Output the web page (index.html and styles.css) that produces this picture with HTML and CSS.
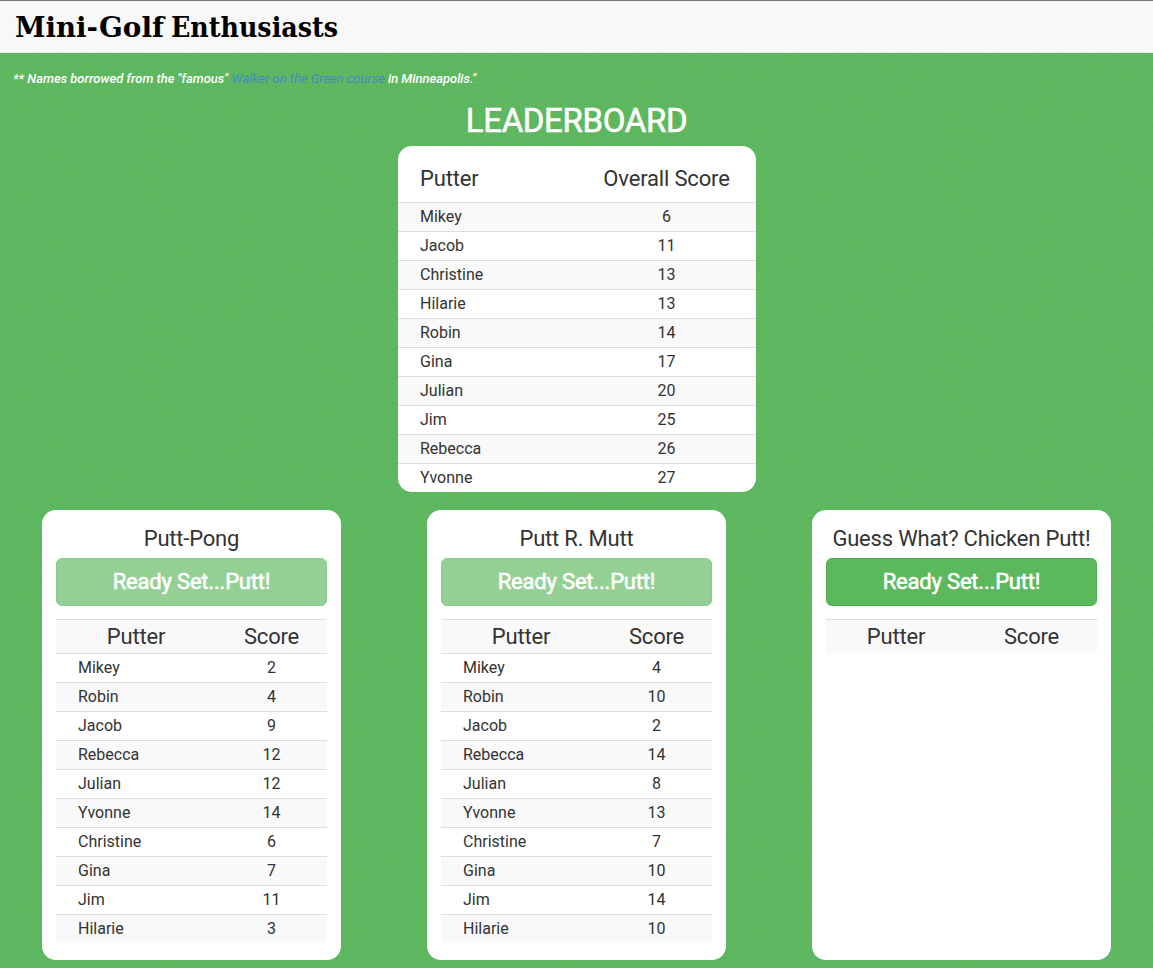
FILE: index.html
```html
<!DOCTYPE html>
<html lang="en">
<head>
<meta charset="utf-8">
<title>Mini-Golf Enthusiasts</title>
<link rel="stylesheet" href="styles.css">
</head>
<body>
<header class="navbar"><svg class="brand" width="400" height="51" role="img"><text x="15" y="37" textLength="83" lengthAdjust="spacingAndGlyphs">Mini-</text><text x="99" y="37" textLength="65" lengthAdjust="spacingAndGlyphs">Golf</text><text x="171" y="37" textLength="167" lengthAdjust="spacingAndGlyphs">Enthusiasts</text></svg></header>
<main>
<p class="note">** Names borrowed from the "famous" <a href="#">Walker on the Green course</a> in Minneapolis."</p>
<h1 class="title">LEADERBOARD</h1>
<table class="scores overall">
<thead><tr><th>Putter</th><th>Overall Score</th></tr></thead>
<tbody>
<tr><td>Mikey</td><td>6</td></tr>
<tr><td>Jacob</td><td>11</td></tr>
<tr><td>Christine</td><td>13</td></tr>
<tr><td>Hilarie</td><td>13</td></tr>
<tr><td>Robin</td><td>14</td></tr>
<tr><td>Gina</td><td>17</td></tr>
<tr><td>Julian</td><td>20</td></tr>
<tr><td>Jim</td><td>25</td></tr>
<tr><td>Rebecca</td><td>26</td></tr>
<tr><td>Yvonne</td><td>27</td></tr>
</tbody>
</table>
<div class="holes">
<section class="card">
<h2>Putt-Pong</h2>
<button class="putt" disabled>Ready Set...Putt!</button>
<table class="scores hole">
<thead><tr><th>Putter</th><th>Score</th></tr></thead>
<tbody>
<tr><td>Mikey</td><td>2</td></tr>
<tr><td>Robin</td><td>4</td></tr>
<tr><td>Jacob</td><td>9</td></tr>
<tr><td>Rebecca</td><td>12</td></tr>
<tr><td>Julian</td><td>12</td></tr>
<tr><td>Yvonne</td><td>14</td></tr>
<tr><td>Christine</td><td>6</td></tr>
<tr><td>Gina</td><td>7</td></tr>
<tr><td>Jim</td><td>11</td></tr>
<tr><td>Hilarie</td><td>3</td></tr>
</tbody>
</table>
</section>
<section class="card">
<h2>Putt R. Mutt</h2>
<button class="putt" disabled>Ready Set...Putt!</button>
<table class="scores hole">
<thead><tr><th>Putter</th><th>Score</th></tr></thead>
<tbody>
<tr><td>Mikey</td><td>4</td></tr>
<tr><td>Robin</td><td>10</td></tr>
<tr><td>Jacob</td><td>2</td></tr>
<tr><td>Rebecca</td><td>14</td></tr>
<tr><td>Julian</td><td>8</td></tr>
<tr><td>Yvonne</td><td>13</td></tr>
<tr><td>Christine</td><td>7</td></tr>
<tr><td>Gina</td><td>10</td></tr>
<tr><td>Jim</td><td>14</td></tr>
<tr><td>Hilarie</td><td>10</td></tr>
</tbody>
</table>
</section>
<section class="card">
<h2>Guess What? Chicken Putt!</h2>
<button class="putt">Ready Set...Putt!</button>
<table class="scores hole empty">
<thead><tr><th>Putter</th><th>Score</th></tr></thead>
</table>
</section>
</div>
</main>
</body>
</html>
```

FILE: styles.css
```css
* { box-sizing: border-box; }
body {
  margin: 0;
  height: 968px;
  overflow: hidden;
  font: 16px/20px Roboto, sans-serif;
  color: #333;
  background: #5eb960 url("data:image/svg+xml,%3Csvg xmlns='http://www.w3.org/2000/svg' width='200' height='200'%3E%3Cfilter id='n' x='0' y='0' width='100%25' height='100%25'%3E%3CfeTurbulence type='fractalNoise' baseFrequency='.4' numOctaves='3' stitchTiles='stitch'/%3E%3CfeColorMatrix values='0 0 0 0 .1 0 0 0 0 .35 0 0 0 0 .1 .6 0 0 0 -.23'/%3E%3C/filter%3E%3Crect width='200' height='200' filter='url(%23n)'/%3E%3C/svg%3E");
}
.navbar {
  height: 53px;
  background: #f8f8f8;
  border-top: 1px solid #777;
  border-bottom: 1px solid #e7e7e7;
}
.brand {
  display: block;
  margin-top: -1px;
  overflow: visible;
  font: bold 27px "DejaVu Serif", serif;
  fill: #000;
}
.note {
  margin: 0;
  padding: 16px 13px 0;
  font-size: 12.95px;
  font-style: italic;
  font-weight: 500;
  color: #fff;
}
.note a {
  font-weight: 400;
  color: #428bca;
  text-decoration: none;
}
.title {
  margin: 12px 0 5px;
  font-size: 33px;
  line-height: 40px;
  font-weight: 400;
  letter-spacing: -.35px;
  -webkit-text-stroke: .6px #fff;
  text-align: center;
  color: #fff;
}
.scores {
  border-collapse: separate;
  border-spacing: 0;
  table-layout: fixed;
  background: #fff;
}
.scores th {
  padding: 0;
  font-size: 22px;
  font-weight: 400;
  letter-spacing: -.17px;
}
.scores td {
  height: 29px;
  padding: 0;
  border-top: 1px solid #ddd;
  text-align: center;
}
.scores td:first-child {
  padding-left: 22px;
  text-align: left;
}
.overall {
  width: 358px;
  margin: 0 auto 18px 398px;
  border-radius: 14px;
  overflow: hidden;
}
.overall th {
  height: 56px;
  padding-top: 10px;
}
.overall th:first-child {
  padding-left: 22px;
  text-align: left;
}
.overall tbody tr:nth-child(odd),
.hole tbody tr:nth-child(even),
.hole thead tr { background: #f9f9f9; }
.holes {
  display: flex;
  gap: 86px;
  padding-left: 42px;
}
.card {
  flex: none;
  width: 299px;
  height: 450px;
  padding: 15px 14px 14px;
  border-radius: 14px;
  background: #fff;
}
.card h2 {
  margin: 0 -10px 5px;
  font-size: 22px;
  line-height: 28px;
  font-weight: 400;
  letter-spacing: -.2px;
  text-align: center;
}
.putt {
  display: block;
  width: 100%;
  height: 48px;
  margin-bottom: 13px;
  padding: 0;
  border: 1px solid #4cae4c;
  border-radius: 6px;
  background: #5cb85c;
  color: #fff;
  font: 400 22px/46px Roboto, sans-serif;
  letter-spacing: -.2px;
  -webkit-text-stroke: .6px #fff;
}
.putt:disabled { opacity: .65; }
.hole { width: 271px; }
.hole th {
  height: 34px;
  border-top: 1px solid #ddd;
}
.hole th:first-child { width: 160px; }
.empty th:first-child { width: 140px; }
```
